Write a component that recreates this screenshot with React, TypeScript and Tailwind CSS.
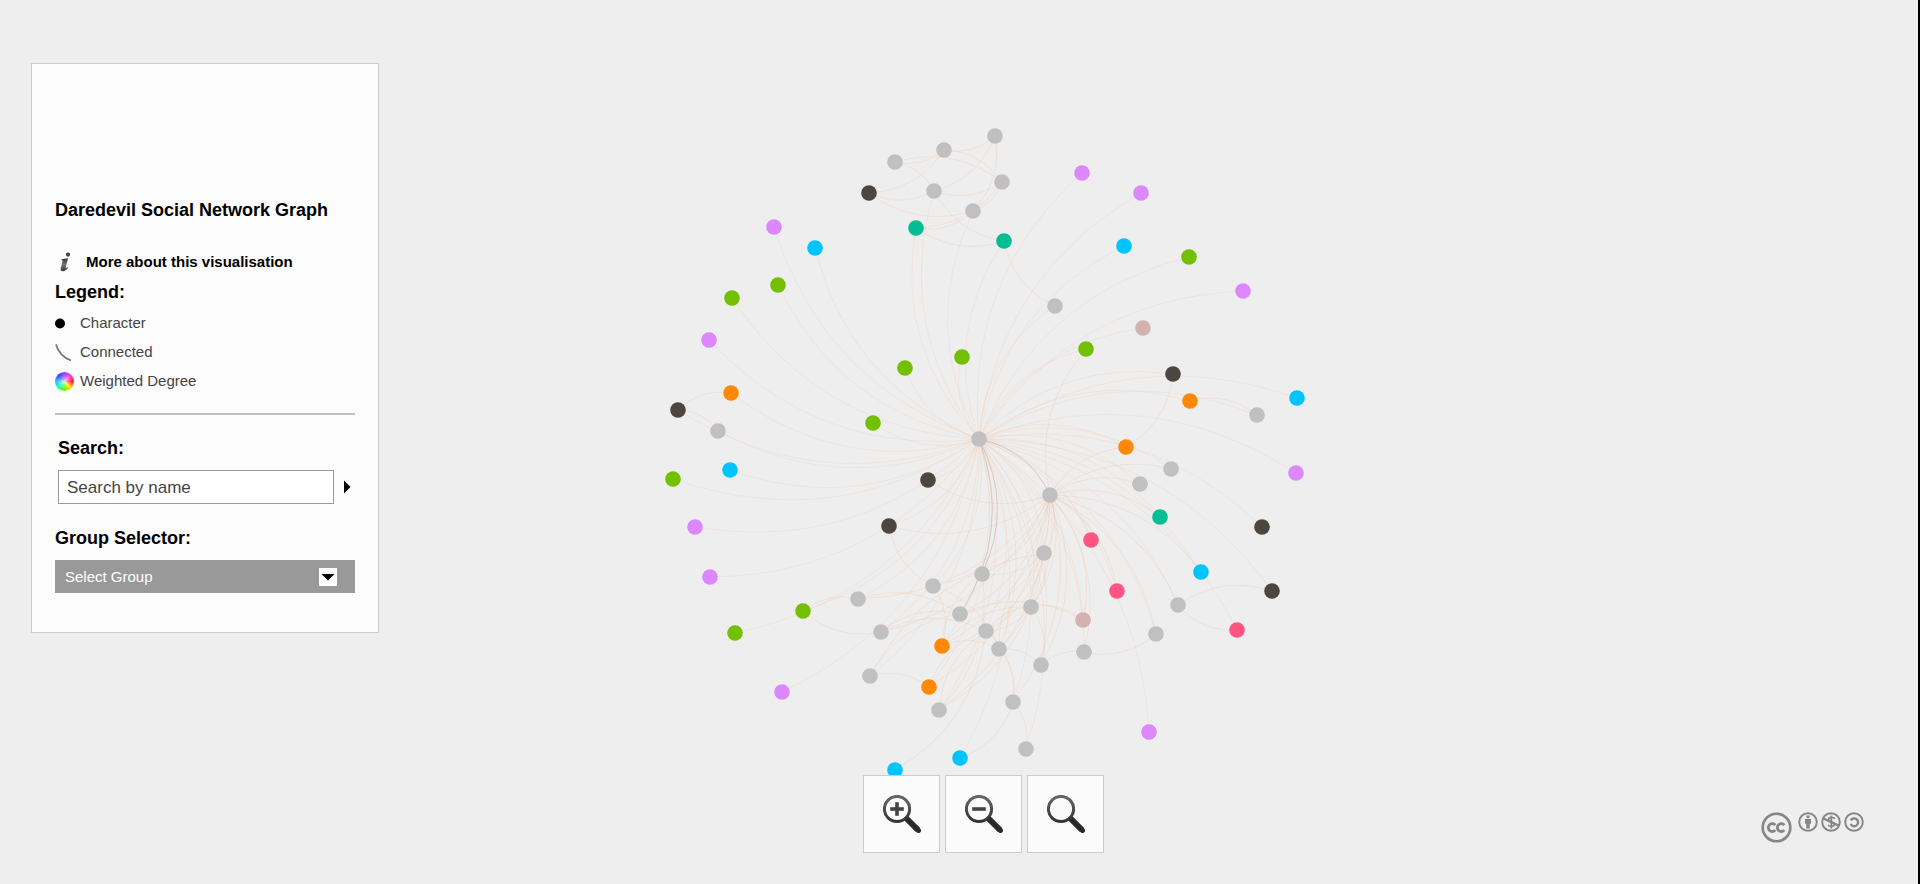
import React from "react";

type Point = [number, number];

const palette = {
  grey: "#c0c0c0",
  dark: "#4c463e",
  purple: "#dd87ff",
  blue: "#00c4ff",
  green: "#73c003",
  orange: "#ff8805",
  teal: "#00be91",
  pink: "#ff5484",
  rose: "#d3b2b0",
};

const nodes: Record<keyof typeof palette, Point[]> = {
  grey: [
    [995, 136], [944, 150], [895, 162], [934, 191], [1002, 182], [973, 211],
    [718, 431], [979, 439], [1055, 306], [1257, 415], [982, 574], [933, 586],
    [858, 599], [960, 614], [881, 632], [986, 631], [999, 649], [870, 676],
    [939, 710], [1050, 495], [1171, 469], [1140, 484], [1044, 553], [1178, 605],
    [1031, 607], [1156, 634], [1084, 652], [1041, 665], [1013, 702], [1026, 749],
  ],
  dark: [[869, 193], [678, 410], [1173, 374], [928, 480], [889, 526], [1262, 527], [1272, 591]],
  purple: [
    [774, 227], [709, 340], [1082, 173], [1141, 193], [1243, 291], [695, 527],
    [710, 577], [782, 692], [1296, 473], [1149, 732],
  ],
  blue: [[815, 248], [1124, 246], [1297, 398], [730, 470], [960, 758], [895, 770], [1201, 572]],
  green: [
    [778, 285], [732, 298], [905, 368], [962, 357], [873, 423], [1189, 257],
    [1086, 349], [673, 479], [803, 611], [735, 633],
  ],
  orange: [[731, 393], [1190, 401], [1126, 447], [942, 646], [929, 687]],
  teal: [[916, 228], [1004, 241], [1160, 517]],
  pink: [[1091, 540], [1117, 591], [1237, 630]],
  rose: [[1143, 328], [1083, 620]],
};

const hub: Point = [979, 439];
const secondHub: Point = [1050, 495];

const colours = Object.keys(nodes) as (keyof typeof palette)[];
const hubEdges: [Point, Point][] = colours
  .flatMap((c) => nodes[c])
  .filter(([x, y]) => !(x === 979 && y === 439) && y < 760 && !(y < 200 && x < 1003 && x !== 934))
  .map((p) => [hub, p]);

const secondHubEdges: [Point, Point][] = (
  [
    [982, 574], [933, 586], [960, 614], [986, 631], [999, 649], [1031, 607],
    [1044, 553], [1041, 665], [1084, 652], [1156, 634], [1178, 605], [1091, 540],
    [1117, 591], [1140, 484], [1171, 469], [1160, 517], [1126, 447], [1083, 620],
    [1013, 702], [939, 710], [881, 632], [858, 599], [889, 526], [928, 480],
    [942, 646], [929, 687], [1201, 572], [1086, 349],
  ] as Point[]
).map((p) => [secondHub, p]);

const localEdges: [Point, Point][] = [
  [[995, 136], [944, 150]], [[995, 136], [973, 211]], [[995, 136], [934, 191]],
  [[944, 150], [895, 162]], [[944, 150], [869, 193]], [[944, 150], [1002, 182]],
  [[895, 162], [934, 191]], [[934, 191], [869, 193]], [[1002, 182], [934, 191]],
  [[1002, 182], [973, 211]], [[1002, 182], [916, 228]], [[973, 211], [869, 193]],
  [[973, 211], [916, 228]], [[1004, 241], [916, 228]], [[1004, 241], [934, 191]],
  [[895, 162], [1002, 182]], [[1055, 306], [1004, 241]], [[678, 410], [731, 393]],
  [[678, 410], [718, 431]], [[1190, 401], [1257, 415]], [[1173, 374], [1126, 447]],
  [[1178, 605], [1272, 591]], [[1237, 630], [1178, 605]], [[1156, 634], [1084, 652]],
  [[803, 611], [858, 599]], [[881, 632], [803, 611]], [[933, 586], [889, 526]],
  [[858, 599], [960, 614]], [[881, 632], [960, 614]], [[881, 632], [986, 631]],
  [[870, 676], [929, 687]], [[870, 676], [960, 614]], [[929, 687], [986, 631]],
  [[942, 646], [982, 574]], [[942, 646], [999, 649]], [[939, 710], [986, 631]],
  [[982, 574], [939, 710]], [[933, 586], [942, 646]], [[933, 586], [999, 649]],
  [[986, 631], [999, 649]], [[986, 631], [1031, 607]], [[999, 649], [1044, 553]],
  [[999, 649], [1041, 665]], [[999, 649], [1013, 702]], [[986, 631], [1013, 702]],
  [[1044, 553], [1031, 607]], [[1031, 607], [1041, 665]], [[1044, 553], [982, 574]],
  [[1031, 607], [1083, 620]], [[960, 614], [1083, 620]], [[1041, 665], [1084, 652]],
  [[1013, 702], [960, 758]], [[1013, 702], [1026, 749]], [[986, 631], [895, 770]],
  [[1044, 553], [960, 614]], [[942, 646], [1031, 607]], [[870, 676], [1044, 553]],
  [[1044, 553], [939, 710]], [[1044, 553], [986, 631]], [[1031, 607], [986, 631]],
];

const strongEdges: [Point, Point][] = [
  [hub, secondHub], [hub, [982, 574]], [hub, [960, 614]],
];

function arc([[x1, y1], [x2, y2]]: [Point, Point]) {
  const cx = (x1 + x2) / 2 + (y2 - y1) / 4;
  const cy = (y1 + y2) / 2 + (x1 - x2) / 4;
  return `M${x1} ${y1}Q${cx} ${cy} ${x2} ${y2}`;
}

function NetworkGraph() {
  return (
    <svg
      className="absolute inset-0 h-full w-full"
      viewBox="0 0 1918 884"
      preserveAspectRatio="xMidYMid meet"
      role="img"
      aria-label="Network of characters"
    >
      <g fill="none" stroke="#f3b998" strokeWidth="1">
        {hubEdges.map((e, i) => (
          <path key={i} d={arc(e)} strokeOpacity="0.2" />
        ))}
        {[...secondHubEdges, ...localEdges].map((e, i) => (
          <path key={i} d={arc(e)} strokeOpacity="0.26" />
        ))}
      </g>
      <g fill="none" stroke="#b09a98" strokeOpacity="0.35">
        {strongEdges.map((e, i) => (
          <path key={i} d={arc(e)} />
        ))}
      </g>
      {colours.map((c) => (
        <g key={c} fill={palette[c]}>
          {nodes[c].map(([x, y]) => (
            <circle key={`${x}-${y}`} cx={x} cy={y} r="7.8" />
          ))}
        </g>
      ))}
    </svg>
  );
}

function InfoIcon() {
  return (
    <svg className="h-5 w-5" viewBox="0 0 20 20" aria-hidden="true">
      <defs>
        <linearGradient id="info" x1="0" y1="0" x2="0" y2="1">
          <stop offset="0" stopColor="#333" />
          <stop offset="0.5" stopColor="#777" />
          <stop offset="1" stopColor="#333" />
        </linearGradient>
      </defs>
      <circle cx="13" cy="2.6" r="2.1" fill="#444" />
      <path
        d="M6.500 7.200 13 6.200 10.800 15.300c-.3 1.100.3 1.200 1.500-.3l.7.5C11.500 18 9.800 19.200 8 19.200c-2.200 0-2.700-1.300-2.200-3.200L7.600 9.200c.2-.8-.2-1-1.300-1z"
        fill="url(#info)"
      />
    </svg>
  );
}

function Magnifier({ sign }: { sign?: "plus" | "minus" }) {
  return (
    <svg className="h-[38px] w-[38px]" viewBox="0 0 38 38" fill="none" aria-hidden="true">
      <defs>
        <linearGradient id="lens" x1="0" y1="0" x2="0" y2="1">
          <stop offset="0" stopColor="#666" />
          <stop offset="1" stopColor="#333" />
        </linearGradient>
      </defs>
      <path d="M23.500 23.500 35 35" stroke="#2a2a2a" strokeWidth="6" />
      <path d="M33 33 35.500 35.500" stroke="#2a2a2a" strokeWidth="5" strokeLinecap="round" />
      <circle cx="14" cy="14" r="12.600" stroke="url(#lens)" strokeWidth="3" />
      {sign && <path d="M7.200 14h13.600" stroke="#444" strokeWidth="3.600" />}
      {sign === "plus" && <path d="M14 7.200v13.600" stroke="#444" strokeWidth="3.600" />}
    </svg>
  );
}

const zoomActions: { label: string; sign?: "plus" | "minus" }[] = [
  { label: "Zoom in", sign: "plus" },
  { label: "Zoom out", sign: "minus" },
  { label: "Reset zoom" },
];

function LicenceBadges() {
  return (
    <a href="#licence" aria-label="Creative Commons licence" className="flex gap-[6px] text-[#868686]">
      <svg className="h-[31px] w-[31px]" viewBox="0 0 31 31" fill="none" stroke="currentColor">
        <circle cx="15.500" cy="15.500" r="13.800" strokeWidth="2.600" />
        <path d="M14.300 13.200a3.900 3.900 0 1 0 0 4.800M23.300 13.200a3.900 3.900 0 1 0 0 4.800" strokeWidth="2.800" />
      </svg>
      <span className="flex gap-[3px]">
        <svg className="h-5 w-5" viewBox="0 0 20 20" fill="none" stroke="currentColor">
          <circle cx="10" cy="10" r="8.800" strokeWidth="1.900" />
          <circle cx="10" cy="4.800" r="1.600" fill="currentColor" stroke="none" />
          <path d="M7 7h6v4.800h-1.300V16.500h-3.400v-4.700H7z" fill="currentColor" stroke="none" />
        </svg>
        <svg className="h-5 w-5" viewBox="0 0 20 20" fill="none" stroke="currentColor">
          <circle cx="10" cy="10" r="8.800" strokeWidth="1.900" />
          <path d="M14 6.800c-2-2.300-6.500-1.900-6.500 1 0 2.600 6 1.700 6 4.300 0 2.700-4.500 3.200-6.500.9M10.300 3.500v13" strokeWidth="1.700" />
          <path d="M1.800 6.200l16.400 7.600" strokeWidth="2.200" />
        </svg>
        <svg className="h-5 w-5" viewBox="0 0 20 20" fill="none" stroke="currentColor">
          <circle cx="10" cy="10" r="8.800" strokeWidth="1.900" />
          <path d="M6.700 8.600a3.900 3.900 0 1 1 0 3.400" strokeWidth="2.400" />
        </svg>
      </span>
    </a>
  );
}

function Sidebar() {
  return (
    <aside className="w-[348px] border border-[#ccc] bg-[#fcfcfc] px-[23px] pt-[134px] pb-[39px]">
      <h1 className="text-lg leading-6 font-bold whitespace-nowrap">Daredevil Social Network Graph</h1>
      <a href="#about" className="mt-[30px] flex items-center gap-[11px] text-[15px] leading-5 font-bold">
        <InfoIcon />
        More about this visualisation
      </a>

      <h2 className="mt-2 text-lg leading-6 font-bold">Legend:</h2>
      <ul className="mt-[5px] text-[15px] text-[#444]">
        <li className="flex h-[29px] items-center gap-[6px]">
          <svg className="h-[19px] w-[19px]" viewBox="0 0 19 19" aria-hidden="true">
            <circle cx="5" cy="9.500" r="5" fill="#000" />
          </svg>
          Character
        </li>
        <li className="flex h-[29px] items-center gap-[6px]">
          <svg className="h-[19px] w-[19px]" viewBox="0 0 19 19" aria-hidden="true">
            <path d="M1 1.500C3 8.500 8 14.500 16 17.500" fill="none" stroke="#777" strokeWidth="1.800" />
          </svg>
          Connected
        </li>
        <li className="flex h-[29px] items-center gap-[6px]">
          <span className="h-[19px] w-[19px] rounded-full bg-[radial-gradient(circle,rgba(255,255,255,0.8),transparent_55%),conic-gradient(from_0deg,#a040ff,#ff40e0,#ff2020,#ffe000,#60ff00,#20ffb0,#30c0ff,#3050ff,#a040ff)]" />
          Weighted Degree
        </li>
      </ul>

      <hr className="mt-[17px] border-t-2 border-[#c0c0c0]" />

      <form className="px-[3px]" onSubmit={(e) => e.preventDefault()}>
        <label htmlFor="search" className="mt-[21px] block text-lg leading-6 font-bold">
          Search:
        </label>
        <div className="mt-[10px] flex items-center gap-[9px]">
          <input
            id="search"
            type="text"
            placeholder="Search by name"
            className="h-[34px] w-[276px] border border-[#999] bg-white px-2 pt-px text-[17px] placeholder:text-[#444]"
          />
          <button type="submit" aria-label="Search" className="py-2">
            <svg className="h-[14px] w-[8px]" viewBox="0 0 8 14" aria-hidden="true">
              <path d="M1 0.500 7.500 7 1 13.500z" />
            </svg>
          </button>
        </div>
      </form>

      <label htmlFor="group" className="mt-[22px] block text-lg leading-6 font-bold">
        Group Selector:
      </label>
      <div className="relative mt-[10px]">
        <select
          id="group"
          className="block h-[33px] w-full appearance-none bg-[#999] px-[10px] pt-px text-[15px] text-white"
        >
          <option>Select Group</option>
        </select>
        <svg
          className="pointer-events-none absolute top-2 right-[18px] h-[18px] w-[18px] bg-white"
          viewBox="0 0 18 18"
          aria-hidden="true"
        >
          <path d="M2.500 6h13L9 12.500z" />
        </svg>
      </div>
    </aside>
  );
}

export default function App() {
  return (
    <main className="relative flex min-h-screen flex-col justify-between border-r-2 border-black bg-[#eee] pt-[63px] pr-[54px] pb-[31px] pl-[31px] font-['Liberation_Sans',Arial,sans-serif] text-black">
      <NetworkGraph />
      <div className="relative flex">
        <Sidebar />
      </div>
      <footer className="relative flex justify-between">
        <div className="ml-[832px] flex gap-[5px]">
          {zoomActions.map(({ label, sign }) => (
            <button
              key={label}
              type="button"
              aria-label={label}
              className="flex h-[78px] w-[77px] items-center justify-center border border-[#ccc] bg-[#fbfbfb]"
            >
              <Magnifier sign={sign} />
            </button>
          ))}
        </div>
        <div className="pt-[37px]">
          <LicenceBadges />
        </div>
      </footer>
    </main>
  );
}
